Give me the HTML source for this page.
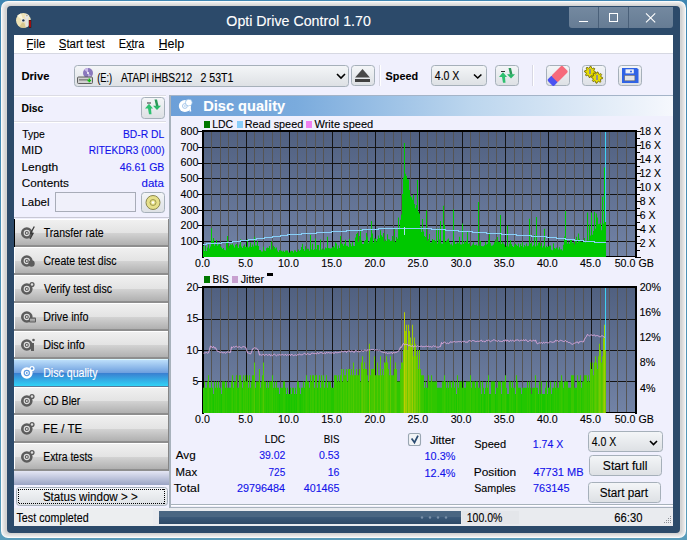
<!DOCTYPE html><html><head><meta charset="utf-8"><style>html,body{margin:0;padding:0;width:687px;height:540px;overflow:hidden;background:#6aa9d6} svg{display:block} text{font-family:"Liberation Sans",sans-serif}</style></head><body>
<svg width="687" height="540" viewBox="0 0 687 540" shape-rendering="crispEdges">
<defs>
<linearGradient id="gFrameL" x1="0" x2="1" y1="0" y2="0"><stop offset="0" stop-color="#ffffff"/><stop offset="1" stop-color="#d9d9d9"/></linearGradient>
<linearGradient id="gPlot" x1="0" x2="0" y1="0" y2="1"><stop offset="0" stop-color="#506080"/><stop offset="1" stop-color="#7283a6"/></linearGradient>
<linearGradient id="gHdr" x1="0" x2="1" y1="0" y2="0"><stop offset="0" stop-color="#6c9fd8"/><stop offset="0.25" stop-color="#7aabdd"/><stop offset="0.6" stop-color="#bcd6ee"/><stop offset="1" stop-color="#f6f8fd"/></linearGradient>
<linearGradient id="gNav" x1="0" x2="0" y1="0" y2="1"><stop offset="0" stop-color="#f2f2f2"/><stop offset="0.45" stop-color="#e2e2e2"/><stop offset="1" stop-color="#b9b9b9"/></linearGradient>
<linearGradient id="gNavSel" x1="0" x2="0" y1="0" y2="1"><stop offset="0" stop-color="#b2d6fa"/><stop offset="0.5" stop-color="#4b96e4"/><stop offset="1" stop-color="#33c6f4"/></linearGradient>
<linearGradient id="gBtn" x1="0" x2="0" y1="0" y2="1"><stop offset="0" stop-color="#f4f6f8"/><stop offset="1" stop-color="#dde0e4"/></linearGradient>
<linearGradient id="gGap" x1="0" x2="0" y1="0" y2="1"><stop offset="0" stop-color="#e6e6f4"/><stop offset="1" stop-color="#a2aac8"/></linearGradient>
<linearGradient id="gProg" x1="0" x2="0" y1="0" y2="1"><stop offset="0" stop-color="#4a6a8a"/><stop offset="0.5" stop-color="#3a5878"/><stop offset="1" stop-color="#2e4a68"/></linearGradient>
</defs>
<linearGradient id="gFr" x1="0" x2="1" y1="0" y2="0"><stop offset="0" stop-color="#ffffff"/><stop offset="0.009" stop-color="#e6e6e6"/><stop offset="0.991" stop-color="#e6e6e6"/><stop offset="1" stop-color="#ffffff"/></linearGradient>
<linearGradient id="gDesk" x1="0" x2="0" y1="0" y2="1"><stop offset="0" stop-color="#3f86b2"/><stop offset="1" stop-color="#5a9cba"/></linearGradient>
<rect x="0" y="0" width="687" height="540" fill="url(#gDesk)" />
<rect x="1" y="1" width="685" height="537" fill="#fafafa" rx="7" shape-rendering="geometricPrecision"/>
<rect x="2" y="2" width="683" height="535" fill="#ececec" rx="6" shape-rendering="geometricPrecision"/>
<rect x="3" y="3" width="681" height="533" fill="#e4e4e4" rx="5" shape-rendering="geometricPrecision"/>
<rect x="4" y="4" width="679" height="531" fill="#dcdcdc" rx="5" shape-rendering="geometricPrecision"/>
<rect x="5" y="5" width="677" height="529" fill="#d4d4d4" rx="4" shape-rendering="geometricPrecision"/>
<rect x="7" y="6" width="673" height="527" fill="#2c4a6a" rx="4" shape-rendering="geometricPrecision"/>
<linearGradient id="gCap" x1="0" x2="0" y1="0" y2="1"><stop offset="0" stop-color="#7489a0"/><stop offset="1" stop-color="#667c94"/></linearGradient><path d="M569 7 H673 V25 Q673 28 670 28 H572 Q569 28 569 25 Z" fill="url(#gCap)" shape-rendering="geometricPrecision"/>
<rect x="598" y="7" width="1" height="21" fill="#4a6079" />
<rect x="628" y="7" width="1" height="21" fill="#4a6079" />
<rect x="579" y="21" width="9" height="1" fill="#ffffff" />
<rect x="609.5" y="13.5" width="8" height="8" fill="none" stroke="#fff" stroke-width="1"/>
<path d="M646 13.3 L655.2 22.3 M655.2 13.3 L646 22.3" stroke="#fff" stroke-width="1.1" shape-rendering="geometricPrecision"/>
<g shape-rendering="geometricPrecision"><circle cx="23.4" cy="20.4" r="7.4" fill="#efe3b6"/><path d="M23.4 20.4 L17 16 A7.4 7.4 0 0 1 21 13.4 Z" fill="#fbf5dc"/><path d="M23.4 20.4 L26 27.4 A7.4 7.4 0 0 1 19.5 26.6 Z" fill="#d8c890"/><circle cx="23.4" cy="20.4" r="2" fill="#f4f4f4"/><circle cx="23.4" cy="20.4" r="1.2" fill="#1e3048"/><rect x="25.5" y="16" width="2.8" height="10.7" fill="#e4e4e4"/><circle cx="26.9" cy="16.2" r="2" fill="#e8e8e8"/><circle cx="26.9" cy="15.6" r="0.8" fill="#b8a878"/><rect x="28.8" y="20" width="2.4" height="7.8" fill="#111"/><rect x="29.2" y="20.4" width="1.6" height="7" fill="#c01010"/></g>
<text x="226.36" y="26.20" font-size="14.5" textLength="144.45" lengthAdjust="spacingAndGlyphs" fill="#ffffff" stroke="#ffffff" stroke-width="0.12" >Opti Drive Control 1.70</text>
<rect x="14" y="35" width="659" height="18" fill="#ffffff" />
<rect x="14" y="53" width="659" height="1" fill="#d6d8e2" />
<text x="26.35" y="48.20" font-size="12.3" textLength="19.10" lengthAdjust="spacingAndGlyphs" fill="#000" stroke="#000" stroke-width="0.12" >File</text>
<text x="58.78" y="48.20" font-size="12.3" textLength="45.89" lengthAdjust="spacingAndGlyphs" fill="#000" stroke="#000" stroke-width="0.12" >Start test</text>
<text x="118.72" y="48.20" font-size="12.3" textLength="25.67" lengthAdjust="spacingAndGlyphs" fill="#000" stroke="#000" stroke-width="0.12" >Extra</text>
<text x="158.40" y="48.20" font-size="12.3" textLength="25.83" lengthAdjust="spacingAndGlyphs" fill="#000" stroke="#000" stroke-width="0.12" >Help</text>
<rect x="27" y="49" width="6" height="1" fill="#000" />
<rect x="59" y="49" width="7" height="1" fill="#000" />
<rect x="128" y="49" width="5" height="1" fill="#000" />
<rect x="159" y="49" width="8" height="1" fill="#000" />
<rect x="14" y="54" width="659" height="472" fill="#f0f0fd" />
<text x="21.47" y="80.00" font-size="11.5" textLength="27.93" lengthAdjust="spacingAndGlyphs" fill="#000" stroke="#000" stroke-width="0.1" font-weight="700" >Drive</text>
<rect x="74.5" y="65.5" width="274" height="21" rx="3" fill="url(#gBtn)" stroke="#a6b0ba" stroke-width="1" shape-rendering="geometricPrecision"/>
<g shape-rendering="geometricPrecision"><circle cx="88" cy="73" r="5" fill="#8a78bc"/><path d="M88 73 L84 69.5 A5 5 0 0 1 88 68 Z" fill="#c8b8e8"/><path d="M88 73 L92 76.5 A5 5 0 0 1 88 78 Z" fill="#b8a8e0"/><circle cx="88" cy="73" r="1" fill="#ffffff"/><rect x="77.5" y="77" width="15" height="6.5" rx="1" fill="#d0d0d0" stroke="#505050" stroke-width="0.9"/><rect x="79" y="79" width="9" height="1.6" fill="#8a8a8a"/><path d="M89.3 78.6 V82.2 M87.5 80.4 H91.1" stroke="#10c010" stroke-width="1.5"/></g>
<text x="97.14" y="81.80" font-size="12.3" textLength="15.03" lengthAdjust="spacingAndGlyphs" fill="#000" stroke="#000" stroke-width="0.12" >(E:)</text>
<text x="121.00" y="81.80" font-size="12.3" textLength="71.22" lengthAdjust="spacingAndGlyphs" fill="#000" stroke="#000" stroke-width="0.12" >ATAPI iHBS212</text>
<text x="200.47" y="81.80" font-size="12.3" textLength="33.04" lengthAdjust="spacingAndGlyphs" fill="#000" stroke="#000" stroke-width="0.12" >2 53T1</text>
<path d="M337 74 L341 78 L345 74" fill="none" stroke="#000" stroke-width="1.6" shape-rendering="geometricPrecision"/>
<rect x="351.5" y="65.5" width="23" height="20" rx="3" fill="url(#gBtn)" stroke="#a6b0ba" stroke-width="1" shape-rendering="geometricPrecision"/>
<path d="M355.1 77.5 L362.5 69 L369.9 77.5 Z" fill="#484848" shape-rendering="geometricPrecision"/>
<rect x="355" y="79" width="15" height="3" fill="#404040" />
<rect x="379" y="65" width="1" height="21" fill="#d8d8e4" />
<rect x="380" y="65" width="1" height="21" fill="#ffffff" />
<text x="385.58" y="79.80" font-size="11.5" textLength="32.44" lengthAdjust="spacingAndGlyphs" fill="#000" stroke="#000" stroke-width="0.1" font-weight="700" >Speed</text>
<rect x="431.5" y="65.5" width="55" height="20" rx="3" fill="url(#gBtn)" stroke="#a6b0ba" stroke-width="1" shape-rendering="geometricPrecision"/>
<text x="434.79" y="79.80" font-size="12.3" textLength="24.62" lengthAdjust="spacingAndGlyphs" fill="#000" stroke="#000" stroke-width="0.12" >4.0 X</text>
<path d="M474 74.5 L477.7 78 L481.4 74.5" fill="none" stroke="#000" stroke-width="1.6" shape-rendering="geometricPrecision"/>
<rect x="495.5" y="65.5" width="23" height="20" rx="3" fill="url(#gBtn)" stroke="#a6b0ba" stroke-width="1" shape-rendering="geometricPrecision"/>
<g shape-rendering="geometricPrecision"><path d="M499 77 L503 72.3 L507 77 L505 77 L505.5 82.8 L503 82.8 L502 77 Z" fill="#2ec070"/><path d="M507 74.2 L515 74.2 L511 78.5 Z" fill="#2ab868"/><path d="M508.5 68 L511 68 L512.5 74.5 L510 74.5 Z" fill="#2a9858"/><rect x="501" y="71" width="4" height="1" fill="#333"/></g>
<rect x="532" y="65" width="1" height="21" fill="#d8d8e4" />
<rect x="533" y="65" width="1" height="21" fill="#ffffff" />
<rect x="546.5" y="65.5" width="23" height="20" rx="3" fill="url(#gBtn)" stroke="#a6b0ba" stroke-width="1" shape-rendering="geometricPrecision"/>
<g shape-rendering="geometricPrecision" transform="rotate(-45 558 75.5)"><rect x="547" y="71" width="7" height="9" rx="1.5" fill="#4a52f2"/><rect x="553" y="71" width="15" height="9" rx="1.5" fill="#f66a7a"/></g>
<rect x="582.5" y="65.5" width="23" height="20" rx="3" fill="url(#gBtn)" stroke="#a6b0ba" stroke-width="1" shape-rendering="geometricPrecision"/>
<g shape-rendering="geometricPrecision"><polygon points="595.70,71.90 595.59,72.99 593.83,73.44 593.45,74.14 594.06,75.86 593.21,76.56 591.64,75.63 590.89,75.85 590.10,77.50 589.01,77.39 588.56,75.63 587.86,75.25 586.14,75.86 585.44,75.01 586.37,73.44 586.15,72.69 584.50,71.90 584.61,70.81 586.37,70.36 586.75,69.66 586.14,67.94 586.99,67.24 588.56,68.17 589.31,67.95 590.10,66.30 591.19,66.41 591.64,68.17 592.34,68.55 594.06,67.94 594.76,68.79 593.83,70.36 594.05,71.11" fill="#e6dc00" stroke="#6a6000" stroke-width="0.8"/><polygon points="602.60,77.60 602.49,78.69 600.73,79.14 600.35,79.84 600.96,81.56 600.11,82.26 598.54,81.33 597.79,81.55 597.00,83.20 595.91,83.09 595.46,81.33 594.76,80.95 593.04,81.56 592.34,80.71 593.27,79.14 593.05,78.39 591.40,77.60 591.51,76.51 593.27,76.06 593.65,75.36 593.04,73.64 593.89,72.94 595.46,73.87 596.21,73.65 597.00,72.00 598.09,72.11 598.54,73.87 599.24,74.25 600.96,73.64 601.66,74.49 600.73,76.06 600.95,76.81" fill="#e6dc00" stroke="#6a6000" stroke-width="0.8"/><rect x="589" y="69" width="2" height="5" fill="#909090"/><rect x="596" y="75" width="2" height="5" fill="#909090"/></g>
<rect x="618.5" y="65.5" width="23" height="20" rx="3" fill="url(#gBtn)" stroke="#a6b0ba" stroke-width="1" shape-rendering="geometricPrecision"/>
<g shape-rendering="geometricPrecision"><path d="M622 68 H637 L638.5 69.5 V83 H622 Z" fill="#2f63e6"/><rect x="625.5" y="69.3" width="8.3" height="4.1" fill="#eef0f4"/><circle cx="631" cy="71.4" r="1" fill="#2f63e6"/><rect x="624.7" y="75.3" width="10.2" height="5.5" fill="#e4e4e4" stroke="#6a6a6a" stroke-width="0.6"/></g>
<rect x="14" y="95" width="152" height="1" fill="#dcdce4" />
<rect x="14" y="96" width="152" height="1" fill="#ffffff" />
<text x="21.53" y="111.90" font-size="11.5" textLength="21.80" lengthAdjust="spacingAndGlyphs" fill="#000" stroke="#000" stroke-width="0.1" font-weight="700" >Disc</text>
<rect x="141.5" y="97.5" width="23" height="21" rx="3" fill="url(#gBtn)" stroke="#a6b0ba" stroke-width="1" shape-rendering="geometricPrecision"/>
<g shape-rendering="geometricPrecision" transform="translate(-354 31.5)"><path d="M499 77 L503 72.3 L507 77 L505 77 L505.5 82.8 L503 82.8 L502 77 Z" fill="#2ec070"/><path d="M507 74.2 L515 74.2 L511 78.5 Z" fill="#2ab868"/><path d="M508.5 68 L511 68 L512.5 74.5 L510 74.5 Z" fill="#2a9858"/><rect x="501" y="71" width="4" height="1" fill="#333"/></g>
<rect x="14" y="121" width="152" height="1" fill="#dcdce4" />
<rect x="14" y="122" width="152" height="1" fill="#ffffff" />
<text x="22.19" y="138.20" font-size="11.5" textLength="22.61" lengthAdjust="spacingAndGlyphs" fill="#000" stroke="#000" stroke-width="0.12" >Type</text>
<text x="122.98" y="138.20" font-size="11.5" textLength="41.24" lengthAdjust="spacingAndGlyphs" fill="#1212ea" stroke="#1212ea" stroke-width="0.12" >BD-R DL</text>
<text x="21.48" y="154.20" font-size="11.5" textLength="21.07" lengthAdjust="spacingAndGlyphs" fill="#000" stroke="#000" stroke-width="0.12" >MID</text>
<text x="88.70" y="154.20" font-size="11.5" textLength="75.83" lengthAdjust="spacingAndGlyphs" fill="#1212ea" stroke="#1212ea" stroke-width="0.12" >RITEKDR3 (000)</text>
<text x="21.44" y="170.60" font-size="11.5" textLength="36.73" lengthAdjust="spacingAndGlyphs" fill="#000" stroke="#000" stroke-width="0.12" >Length</text>
<text x="119.79" y="170.60" font-size="11.5" textLength="44.64" lengthAdjust="spacingAndGlyphs" fill="#1212ea" stroke="#1212ea" stroke-width="0.12" >46.61 GB</text>
<text x="21.81" y="186.80" font-size="11.5" textLength="47.07" lengthAdjust="spacingAndGlyphs" fill="#000" stroke="#000" stroke-width="0.12" >Contents</text>
<text x="141.54" y="186.80" font-size="11.5" textLength="22.38" lengthAdjust="spacingAndGlyphs" fill="#1212ea" stroke="#1212ea" stroke-width="0.12" >data</text>
<text x="21.48" y="206.00" font-size="11.5" textLength="28.09" lengthAdjust="spacingAndGlyphs" fill="#000" stroke="#000" stroke-width="0.12" >Label</text>
<rect x="55.5" y="192.5" width="80" height="19" fill="#f0f0fa" stroke="#a8acb8" stroke-width="1"/>
<rect x="141.5" y="192.5" width="23" height="20" rx="3" fill="url(#gBtn)" stroke="#a6b0ba" stroke-width="1" shape-rendering="geometricPrecision"/>
<g shape-rendering="geometricPrecision"><circle cx="153" cy="202.5" r="7" fill="#e6e08a" stroke="#8a8650" stroke-width="1"/><circle cx="153" cy="202.5" r="3" fill="none" stroke="#a09a50" stroke-width="1"/><circle cx="153" cy="202.5" r="1.2" fill="#fff"/></g>
<rect x="14" y="217" width="155" height="1" fill="#c8c8d4" />
<linearGradient id="gNavT" x1="0" x2="0" y1="0" y2="1"><stop offset="0" stop-color="#f0f0f0"/><stop offset="1" stop-color="#e3e3e3"/></linearGradient>
<linearGradient id="gNavB" x1="0" x2="0" y1="0" y2="1"><stop offset="0" stop-color="#d3d3d3"/><stop offset="1" stop-color="#b0b0b0"/></linearGradient>
<linearGradient id="gSelT" x1="0" x2="0" y1="0" y2="1"><stop offset="0" stop-color="#bcdefa"/><stop offset="1" stop-color="#6c9ede"/></linearGradient>
<linearGradient id="gSelB" x1="0" x2="0" y1="0" y2="1"><stop offset="0" stop-color="#3a7ed0"/><stop offset="1" stop-color="#30d2f6"/></linearGradient>
<rect x="14" y="219" width="155" height="1" fill="#ffffff" />
<rect x="14" y="220" width="154" height="13" fill="url(#gNavT)" />
<rect x="14" y="233" width="154" height="12" fill="url(#gNavB)" />
<rect x="14" y="245" width="155" height="2" fill="#8e8e8e" />
<rect x="168" y="219" width="1" height="28" fill="#868686" />
<rect x="14" y="219" width="1" height="26" fill="#ffffff" />
<rect x="14" y="219" width="1" height="28" fill="#000000" />
<g shape-rendering="geometricPrecision"><circle cx="26.8" cy="233" r="5.8" fill="#5c5c5c"/><circle cx="26.8" cy="233" r="2.6" fill="none" stroke="#e0e0e0" stroke-width="1.1"/><circle cx="26.8" cy="233" r="0.9" fill="#e0e0e0"/>
<path d="M34.3 226.5 L30.5 233.5 L33 233.5 L30 239" fill="none" stroke="#3a3a3a" stroke-width="1.3"/>
</g>
<text x="43.79" y="236.80" font-size="12.3" textLength="59.91" lengthAdjust="spacingAndGlyphs" fill="#000" stroke="#000" stroke-width="0.12" >Transfer rate</text>
<rect x="14" y="247" width="155" height="1" fill="#ffffff" />
<rect x="14" y="248" width="154" height="13" fill="url(#gNavT)" />
<rect x="14" y="261" width="154" height="12" fill="url(#gNavB)" />
<rect x="14" y="273" width="155" height="2" fill="#8e8e8e" />
<rect x="168" y="247" width="1" height="28" fill="#868686" />
<rect x="14" y="247" width="1" height="26" fill="#ffffff" />
<g shape-rendering="geometricPrecision"><circle cx="26.8" cy="261" r="5.8" fill="#5c5c5c"/><circle cx="26.8" cy="261" r="2.6" fill="none" stroke="#e0e0e0" stroke-width="1.1"/><circle cx="26.8" cy="261" r="0.9" fill="#e0e0e0"/>
<circle cx="31.5" cy="263.5" r="3.2" fill="#5c5c5c"/>
</g>
<text x="43.47" y="264.80" font-size="12.3" textLength="73.01" lengthAdjust="spacingAndGlyphs" fill="#000" stroke="#000" stroke-width="0.12" >Create test disc</text>
<rect x="14" y="275" width="155" height="1" fill="#ffffff" />
<rect x="14" y="276" width="154" height="13" fill="url(#gNavT)" />
<rect x="14" y="289" width="154" height="12" fill="url(#gNavB)" />
<rect x="14" y="301" width="155" height="2" fill="#8e8e8e" />
<rect x="168" y="275" width="1" height="28" fill="#868686" />
<rect x="14" y="275" width="1" height="26" fill="#ffffff" />
<g shape-rendering="geometricPrecision"><circle cx="26.8" cy="289" r="5.8" fill="#5c5c5c"/><circle cx="26.8" cy="289" r="2.6" fill="none" stroke="#e0e0e0" stroke-width="1.1"/><circle cx="26.8" cy="289" r="0.9" fill="#e0e0e0"/>
<circle cx="32" cy="284.5" r="2.6" fill="#5c5c5c"/><circle cx="32" cy="284.5" r="1.2" fill="#e0e0e0"/>
</g>
<text x="43.95" y="292.80" font-size="12.3" textLength="68.04" lengthAdjust="spacingAndGlyphs" fill="#000" stroke="#000" stroke-width="0.12" >Verify test disc</text>
<rect x="14" y="303" width="155" height="1" fill="#ffffff" />
<rect x="14" y="304" width="154" height="13" fill="url(#gNavT)" />
<rect x="14" y="317" width="154" height="12" fill="url(#gNavB)" />
<rect x="14" y="329" width="155" height="2" fill="#8e8e8e" />
<rect x="168" y="303" width="1" height="28" fill="#868686" />
<rect x="14" y="303" width="1" height="26" fill="#ffffff" />
<g shape-rendering="geometricPrecision"><circle cx="26.8" cy="317" r="5.8" fill="#5c5c5c"/><circle cx="26.8" cy="317" r="2.6" fill="none" stroke="#e0e0e0" stroke-width="1.1"/><circle cx="26.8" cy="317" r="0.9" fill="#e0e0e0"/>
<rect x="29" y="317.5" width="7" height="5" rx="1" fill="#5c5c5c"/><rect x="30" y="318.8" width="5" height="0.9" fill="#d0d0d0"/><rect x="30" y="320.4" width="5" height="0.9" fill="#d0d0d0"/>
</g>
<text x="43.14" y="320.80" font-size="12.3" textLength="45.38" lengthAdjust="spacingAndGlyphs" fill="#000" stroke="#000" stroke-width="0.12" >Drive info</text>
<rect x="14" y="331" width="155" height="1" fill="#ffffff" />
<rect x="14" y="332" width="154" height="13" fill="url(#gNavT)" />
<rect x="14" y="345" width="154" height="12" fill="url(#gNavB)" />
<rect x="14" y="357" width="155" height="2" fill="#8e8e8e" />
<rect x="168" y="331" width="1" height="28" fill="#868686" />
<rect x="14" y="331" width="1" height="26" fill="#ffffff" />
<g shape-rendering="geometricPrecision"><circle cx="26.8" cy="345" r="5.8" fill="#5c5c5c"/><circle cx="26.8" cy="345" r="2.6" fill="none" stroke="#e0e0e0" stroke-width="1.1"/><circle cx="26.8" cy="345" r="0.9" fill="#e0e0e0"/>
<rect x="31" y="343" width="3" height="8" fill="#5c5c5c"/><circle cx="33.5" cy="340" r="1.3" fill="#5c5c5c"/>
</g>
<text x="43.13" y="348.80" font-size="12.3" textLength="41.60" lengthAdjust="spacingAndGlyphs" fill="#000" stroke="#000" stroke-width="0.12" >Disc info</text>
<rect x="14" y="359" width="155" height="1" fill="#d8f6ff" />
<rect x="14" y="360" width="154" height="13" fill="url(#gSelT)" />
<rect x="14" y="373" width="154" height="13" fill="url(#gSelB)" />
<rect x="14" y="386" width="155" height="1" fill="#5a7a98" />
<rect x="168" y="359" width="1" height="28" fill="#5a7a98" />
<g shape-rendering="geometricPrecision"><circle cx="26.8" cy="373" r="5.8" fill="#ffffff"/><circle cx="26.8" cy="373" r="2.6" fill="none" stroke="#5d9ae0" stroke-width="1.1"/><circle cx="26.8" cy="373" r="0.9" fill="#5d9ae0"/>
<circle cx="32" cy="368.5" r="2.6" fill="#ffffff"/><circle cx="32" cy="368.5" r="1.2" fill="#5d9ae0"/>
</g>
<text x="43.15" y="376.80" font-size="12.3" textLength="54.33" lengthAdjust="spacingAndGlyphs" fill="#ffffff" stroke="#ffffff" stroke-width="0.12" >Disc quality</text>
<rect x="14" y="387" width="155" height="1" fill="#ffffff" />
<rect x="14" y="388" width="154" height="13" fill="url(#gNavT)" />
<rect x="14" y="401" width="154" height="12" fill="url(#gNavB)" />
<rect x="14" y="413" width="155" height="2" fill="#8e8e8e" />
<rect x="168" y="387" width="1" height="28" fill="#868686" />
<rect x="14" y="387" width="1" height="26" fill="#ffffff" />
<g shape-rendering="geometricPrecision"><circle cx="26.8" cy="401" r="5.8" fill="#5c5c5c"/><circle cx="26.8" cy="401" r="2.6" fill="none" stroke="#e0e0e0" stroke-width="1.1"/><circle cx="26.8" cy="401" r="0.9" fill="#e0e0e0"/>
<circle cx="32" cy="396.5" r="2.6" fill="#5c5c5c"/><circle cx="32" cy="396.5" r="1.2" fill="#e0e0e0"/>
</g>
<text x="43.47" y="404.80" font-size="12.3" textLength="36.89" lengthAdjust="spacingAndGlyphs" fill="#000" stroke="#000" stroke-width="0.12" >CD Bler</text>
<rect x="14" y="415" width="155" height="1" fill="#ffffff" />
<rect x="14" y="416" width="154" height="13" fill="url(#gNavT)" />
<rect x="14" y="429" width="154" height="12" fill="url(#gNavB)" />
<rect x="14" y="441" width="155" height="2" fill="#8e8e8e" />
<rect x="168" y="415" width="1" height="28" fill="#868686" />
<rect x="14" y="415" width="1" height="26" fill="#ffffff" />
<g shape-rendering="geometricPrecision"><circle cx="26.8" cy="429" r="5.8" fill="#5c5c5c"/><circle cx="26.8" cy="429" r="2.6" fill="none" stroke="#e0e0e0" stroke-width="1.1"/><circle cx="26.8" cy="429" r="0.9" fill="#e0e0e0"/>
<circle cx="32" cy="424.5" r="2.6" fill="#5c5c5c"/><circle cx="32" cy="424.5" r="1.2" fill="#e0e0e0"/>
</g>
<text x="43.07" y="432.80" font-size="12.3" textLength="39.21" lengthAdjust="spacingAndGlyphs" fill="#000" stroke="#000" stroke-width="0.12" >FE / TE</text>
<rect x="14" y="443" width="155" height="1" fill="#ffffff" />
<rect x="14" y="444" width="154" height="13" fill="url(#gNavT)" />
<rect x="14" y="457" width="154" height="12" fill="url(#gNavB)" />
<rect x="14" y="469" width="155" height="2" fill="#8e8e8e" />
<rect x="168" y="443" width="1" height="28" fill="#868686" />
<rect x="14" y="443" width="1" height="26" fill="#ffffff" />
<g shape-rendering="geometricPrecision"><circle cx="26.8" cy="457" r="5.8" fill="#5c5c5c"/><circle cx="26.8" cy="457" r="2.6" fill="none" stroke="#e0e0e0" stroke-width="1.1"/><circle cx="26.8" cy="457" r="0.9" fill="#e0e0e0"/>
<circle cx="32" cy="452.5" r="2.6" fill="#5c5c5c"/><circle cx="32" cy="452.5" r="1.2" fill="#e0e0e0"/>
</g>
<text x="43.16" y="460.80" font-size="12.3" textLength="49.39" lengthAdjust="spacingAndGlyphs" fill="#000" stroke="#000" stroke-width="0.12" >Extra tests</text>
<rect x="169" y="95" width="2" height="413" fill="#a8b2bc" />
<linearGradient id="gGap2" x1="0" x2="0" y1="0" y2="1"><stop offset="0" stop-color="#e4e6f4"/><stop offset="1" stop-color="#9aa4c4"/></linearGradient>
<rect x="14" y="471" width="155" height="14" fill="url(#gGap2)" />
<rect x="16.5" y="487.5" width="151" height="18" rx="3" fill="url(#gBtn)" stroke="#a6b0ba" stroke-width="1" shape-rendering="geometricPrecision"/>
<rect x="18.5" y="489.5" width="146" height="14" rx="1" fill="none" stroke="#000" stroke-width="1" stroke-dasharray="1 1"/>
<text x="42.88" y="501.30" font-size="12.3" textLength="94.86" lengthAdjust="spacingAndGlyphs" fill="#000" stroke="#000" stroke-width="0.12" >Status window &gt; &gt;</text>
<rect x="169" y="507" width="504" height="1" fill="#a8b2bc" />
<rect x="171" y="504" width="502" height="1" fill="#a8b2bc" />
<rect x="171" y="505" width="502" height="1" fill="#ffffff" />
<rect x="171" y="95" width="502" height="1" fill="#a4b4c8" />
<rect x="171" y="96" width="502" height="20" fill="url(#gHdr)" />
<g shape-rendering="geometricPrecision"><circle cx="184.9" cy="106" r="6.1" fill="#ffffff"/><circle cx="184.9" cy="106" r="2.4" fill="none" stroke="#9cc0e8" stroke-width="0.9"/><circle cx="184.9" cy="106" r="0.8" fill="#9cc0e8"/><circle cx="188.8" cy="102.6" r="3.4" fill="#ffffff" stroke="#8ab8e4" stroke-width="0.7"/><path d="M189.5 106 L190.5 111.5" stroke="#fff" stroke-width="1.6"/></g>
<text x="203.25" y="111.30" font-size="15" textLength="81.86" lengthAdjust="spacingAndGlyphs" fill="#ffffff" stroke="#ffffff" stroke-width="0.1" font-weight="700" >Disc quality</text>
<rect x="204" y="121" width="6" height="7" fill="#007800" />
<text x="212.16" y="128.00" font-size="11" textLength="20.91" lengthAdjust="spacingAndGlyphs" fill="#000" stroke="#000" stroke-width="0.12" >LDC</text>
<rect x="237" y="121" width="6" height="7" fill="#88ccf8" />
<text x="244.73" y="128.00" font-size="11" textLength="58.51" lengthAdjust="spacingAndGlyphs" fill="#000" stroke="#000" stroke-width="0.12" >Read speed</text>
<rect x="306" y="121" width="6" height="7" fill="#f080f0" />
<text x="314.44" y="128.00" font-size="11" textLength="58.80" lengthAdjust="spacingAndGlyphs" fill="#000" stroke="#000" stroke-width="0.12" >Write speed</text>
<rect x="203" y="131" width="433" height="126" fill="url(#gPlot)" />
<rect x="203" y="241" width="433" height="1" fill="#141414" />
<rect x="203" y="225" width="433" height="1" fill="#141414" />
<rect x="203" y="210" width="433" height="1" fill="#141414" />
<rect x="203" y="194" width="433" height="1" fill="#141414" />
<rect x="203" y="178" width="433" height="1" fill="#141414" />
<rect x="203" y="163" width="433" height="1" fill="#141414" />
<rect x="203" y="147" width="433" height="1" fill="#141414" />
<rect x="211" y="132" width="1" height="125" fill="#555555" />
<rect x="220" y="132" width="1" height="125" fill="#555555" />
<rect x="228" y="132" width="1" height="125" fill="#555555" />
<rect x="237" y="132" width="1" height="125" fill="#555555" />
<rect x="246" y="132" width="1" height="125" fill="#141414" />
<rect x="254" y="132" width="1" height="125" fill="#555555" />
<rect x="263" y="132" width="1" height="125" fill="#555555" />
<rect x="272" y="132" width="1" height="125" fill="#555555" />
<rect x="280" y="132" width="1" height="125" fill="#555555" />
<rect x="289" y="132" width="1" height="125" fill="#141414" />
<rect x="297" y="132" width="1" height="125" fill="#555555" />
<rect x="306" y="132" width="1" height="125" fill="#555555" />
<rect x="315" y="132" width="1" height="125" fill="#555555" />
<rect x="323" y="132" width="1" height="125" fill="#555555" />
<rect x="332" y="132" width="1" height="125" fill="#141414" />
<rect x="341" y="132" width="1" height="125" fill="#555555" />
<rect x="349" y="132" width="1" height="125" fill="#555555" />
<rect x="358" y="132" width="1" height="125" fill="#555555" />
<rect x="367" y="132" width="1" height="125" fill="#555555" />
<rect x="375" y="132" width="1" height="125" fill="#141414" />
<rect x="384" y="132" width="1" height="125" fill="#555555" />
<rect x="393" y="132" width="1" height="125" fill="#555555" />
<rect x="401" y="132" width="1" height="125" fill="#555555" />
<rect x="410" y="132" width="1" height="125" fill="#555555" />
<rect x="419" y="132" width="1" height="125" fill="#141414" />
<rect x="427" y="132" width="1" height="125" fill="#555555" />
<rect x="436" y="132" width="1" height="125" fill="#555555" />
<rect x="444" y="132" width="1" height="125" fill="#555555" />
<rect x="453" y="132" width="1" height="125" fill="#555555" />
<rect x="462" y="132" width="1" height="125" fill="#141414" />
<rect x="470" y="132" width="1" height="125" fill="#555555" />
<rect x="479" y="132" width="1" height="125" fill="#555555" />
<rect x="488" y="132" width="1" height="125" fill="#555555" />
<rect x="496" y="132" width="1" height="125" fill="#555555" />
<rect x="505" y="132" width="1" height="125" fill="#141414" />
<rect x="514" y="132" width="1" height="125" fill="#555555" />
<rect x="522" y="132" width="1" height="125" fill="#555555" />
<rect x="531" y="132" width="1" height="125" fill="#555555" />
<rect x="540" y="132" width="1" height="125" fill="#555555" />
<rect x="548" y="132" width="1" height="125" fill="#141414" />
<rect x="557" y="132" width="1" height="125" fill="#555555" />
<rect x="565" y="132" width="1" height="125" fill="#555555" />
<rect x="574" y="132" width="1" height="125" fill="#555555" />
<rect x="583" y="132" width="1" height="125" fill="#555555" />
<rect x="591" y="132" width="1" height="125" fill="#141414" />
<rect x="600" y="132" width="1" height="125" fill="#555555" />
<rect x="609" y="132" width="1" height="125" fill="#555555" />
<rect x="617" y="132" width="1" height="125" fill="#555555" />
<rect x="626" y="132" width="1" height="125" fill="#555555" />
<rect x="202" y="130" width="435" height="2" fill="#000" />
<rect x="202" y="130" width="2" height="128" fill="#000" />
<rect x="635" y="130" width="2" height="128" fill="#000" />
<rect x="202" y="256" width="435" height="1" fill="#000" />
<path d="M203 245.7H204V257H203ZM204 251.0H205V257H204ZM205 245.8H206V257H205ZM206 250.9H207V257H206ZM207 247.4H208V257H207ZM208 244.5H209V257H208ZM209 248.6H210V257H209ZM210 246.6H211V257H210ZM211 228.2H212V257H211ZM212 241.0H213V257H212ZM213 238.1H214V257H213ZM214 245.7H215V257H214ZM215 243.1H216V257H215ZM216 239.9H217V257H216ZM217 245.7H218V257H217ZM218 244.5H219V257H218ZM219 243.7H220V257H219ZM220 246.2H221V257H220ZM221 247.4H222V257H221ZM222 249.1H223V257H222ZM223 248.0H224V257H223ZM224 249.9H225V257H224ZM225 250.3H226V257H225ZM226 242.9H227V257H226ZM227 236.1H228V257H227ZM228 247.7H229V257H228ZM229 245.7H230V257H229ZM230 244.2H231V257H230ZM231 244.8H232V257H231ZM232 243.5H233V257H232ZM233 245.4H234V257H233ZM234 247.6H235V257H234ZM235 244.7H236V257H235ZM236 243.9H237V257H236ZM237 246.1H238V257H237ZM238 248.0H239V257H238ZM239 244.5H240V257H239ZM240 239.3H241V257H240ZM241 246.4H242V257H241ZM242 247.9H243V257H242ZM243 245.7H244V257H243ZM244 244.5H245V257H244ZM245 247.1H246V257H245ZM246 246.8H247V257H246ZM247 239.4H248V257H247ZM248 247.6H249V257H248ZM249 246.5H250V257H249ZM250 242.6H251V257H250ZM251 247.1H252V257H251ZM252 244.6H253V257H252ZM253 246.6H254V257H253ZM254 236.8H255V257H254ZM255 245.6H256V257H255ZM256 245.6H257V257H256ZM257 241.1H258V257H257ZM258 245.9H259V257H258ZM259 249.9H260V257H259ZM260 249.9H261V257H260ZM261 251.5H262V257H261ZM262 251.6H263V257H262ZM263 246.8H264V257H263ZM264 250.5H265V257H264ZM265 251.1H266V257H265ZM266 248.3H267V257H266ZM267 247.6H268V257H267ZM268 248.1H269V257H268ZM269 245.9H270V257H269ZM270 249.4H271V257H270ZM271 241.5H272V257H271ZM272 249.5H273V257H272ZM273 245.8H274V257H273ZM274 247.0H275V257H274ZM275 248.4H276V257H275ZM276 247.4H277V257H276ZM277 250.5H278V257H277ZM278 252.0H279V257H278ZM279 250.1H280V257H279ZM280 250.6H281V257H280ZM281 250.8H282V257H281ZM282 251.4H283V257H282ZM283 250.7H284V257H283ZM284 252.1H285V257H284ZM285 250.5H286V257H285ZM286 250.6H287V257H286ZM287 250.6H288V257H287ZM288 252.4H289V257H288ZM289 252.5H290V257H289ZM290 251.4H291V257H290ZM291 250.8H292V257H291ZM292 251.1H293V257H292ZM293 252.4H294V257H293ZM294 250.2H295V257H294ZM295 250.5H296V257H295ZM296 251.9H297V257H296ZM297 251.4H298V257H297ZM298 249.6H299V257H298ZM299 251.0H300V257H299ZM300 250.0H301V257H300ZM301 247.1H302V257H301ZM302 243.8H303V257H302ZM303 249.0H304V257H303ZM304 250.7H305V257H304ZM305 246.2H306V257H305ZM306 249.6H307V257H306ZM307 248.7H308V257H307ZM308 248.8H309V257H308ZM309 250.7H310V257H309ZM310 234.9H311V257H310ZM311 249.4H312V257H311ZM312 243.8H313V257H312ZM313 250.0H314V257H313ZM314 249.2H315V257H314ZM315 238.4H316V257H315ZM316 249.3H317V257H316ZM317 244.9H318V257H317ZM318 245.0H319V257H318ZM319 250.2H320V257H319ZM320 239.4H321V257H320ZM321 249.5H322V257H321ZM322 248.6H323V257H322ZM323 250.1H324V257H323ZM324 249.6H325V257H324ZM325 247.6H326V257H325ZM326 248.3H327V257H326ZM327 236.8H328V257H327ZM328 247.9H329V257H328ZM329 248.2H330V257H329ZM330 248.4H331V257H330ZM331 248.2H332V257H331ZM332 247.2H333V257H332ZM333 246.0H334V257H333ZM334 247.4H335V257H334ZM335 242.3H336V257H335ZM336 243.5H337V257H336ZM337 248.8H338V257H337ZM338 245.5H339V257H338ZM339 248.1H340V257H339ZM340 236.1H341V257H340ZM341 243.8H342V257H341ZM342 243.7H343V257H342ZM343 245.7H344V257H343ZM344 243.7H345V257H344ZM345 239.7H346V257H345ZM346 245.8H347V257H346ZM347 245.7H348V257H347ZM348 247.1H349V257H348ZM349 238.9H350V257H349ZM350 243.4H351V257H350ZM351 246.3H352V257H351ZM352 241.9H353V257H352ZM353 245.7H354V257H353ZM354 245.9H355V257H354ZM355 237.6H356V257H355ZM356 234.0H357V257H356ZM357 232.8H358V257H357ZM358 241.7H359V257H358ZM359 235.9H360V257H359ZM360 229.3H361V257H360ZM361 240.5H362V257H361ZM362 244.0H363V257H362ZM363 244.0H364V257H363ZM364 241.1H365V257H364ZM365 240.1H366V257H365ZM366 233.1H367V257H366ZM367 236.7H368V257H367ZM368 243.3H369V257H368ZM369 241.1H370V257H369ZM370 237.5H371V257H370ZM371 221.1H372V257H371ZM372 233.4H373V257H372ZM373 242.7H374V257H373ZM374 238.3H375V257H374ZM375 238.7H376V257H375ZM376 241.6H377V257H376ZM377 238.9H378V257H377ZM378 235.5H379V257H378ZM379 238.1H380V257H379ZM380 230.2H381V257H380ZM381 235.2H382V257H381ZM382 236.7H383V257H382ZM383 233.0H384V257H383ZM384 241.3H385V257H384ZM385 239.6H386V257H385ZM386 241.0H387V257H386ZM387 234.3H388V257H387ZM388 239.2H389V257H388ZM389 239.5H390V257H389ZM390 241.1H391V257H390ZM391 240.8H392V257H391ZM392 236.0H393V257H392ZM393 241.5H394V257H393ZM394 228.7H395V257H394ZM395 241.9H396V257H395ZM396 237.1H397V257H396ZM397 238.7H398V257H397ZM398 217.6H399V257H398ZM399 229.3H400V257H399ZM400 219.8H401V257H400ZM401 214.5H402V257H401ZM402 194.0H403V257H402ZM403 177.6H404V257H403ZM404 143.0H405V257H404ZM405 173.8H406V257H405ZM406 176.0H407V257H406ZM407 179.2H408V257H407ZM408 179.4H409V257H408ZM409 189.9H410V257H409ZM410 195.9H411V257H410ZM411 197.2H412V257H411ZM412 199.7H413V257H412ZM413 194.5H414V257H413ZM414 204.0H415V257H414ZM415 208.3H416V257H415ZM416 205.1H417V257H416ZM417 179.9H418V257H417ZM418 211.7H419V257H418ZM419 213.6H420V257H419ZM420 227.0H421V257H420ZM421 231.9H422V257H421ZM422 218.9H423V257H422ZM423 231.6H424V257H423ZM424 236.0H425V257H424ZM425 236.9H426V257H425ZM426 210.5H427V257H426ZM427 240.8H428V257H427ZM428 238.9H429V257H428ZM429 234.0H430V257H429ZM430 242.7H431V257H430ZM431 242.4H432V257H431ZM432 239.1H433V257H432ZM433 240.0H434V257H433ZM434 240.0H435V257H434ZM435 241.2H436V257H435ZM436 228.8H437V257H436ZM437 243.5H438V257H437ZM438 228.4H439V257H438ZM439 239.4H440V257H439ZM440 221.1H441V257H440ZM441 243.6H442V257H441ZM442 243.7H443V257H442ZM443 205.8H444V257H443ZM444 224.8H445V257H444ZM445 241.9H446V257H445ZM446 240.7H447V257H446ZM447 239.5H448V257H447ZM448 238.5H449V257H448ZM449 242.6H450V257H449ZM450 244.6H451V257H450ZM451 243.5H452V257H451ZM452 245.6H453V257H452ZM453 209.4H454V257H453ZM454 241.2H455V257H454ZM455 243.9H456V257H455ZM456 243.4H457V257H456ZM457 242.2H458V257H457ZM458 243.3H459V257H458ZM459 236.7H460V257H459ZM460 244.3H461V257H460ZM461 244.6H462V257H461ZM462 223.6H463V257H462ZM463 243.9H464V257H463ZM464 240.9H465V257H464ZM465 242.5H466V257H465ZM466 240.8H467V257H466ZM467 231.4H468V257H467ZM468 243.8H469V257H468ZM469 242.7H470V257H469ZM470 246.3H471V257H470ZM471 245.8H472V257H471ZM472 244.6H473V257H472ZM473 242.3H474V257H473ZM474 245.1H475V257H474ZM475 244.9H476V257H475ZM476 244.4H477V257H476ZM477 245.7H478V257H477ZM478 201.9H479V257H478ZM479 245.4H480V257H479ZM480 241.0H481V257H480ZM481 245.9H482V257H481ZM482 246.2H483V257H482ZM483 246.2H484V257H483ZM484 245.3H485V257H484ZM485 241.7H486V257H485ZM486 244.5H487V257H486ZM487 243.8H488V257H487ZM488 239.7H489V257H488ZM489 232.4H490V257H489ZM490 243.3H491V257H490ZM491 245.7H492V257H491ZM492 245.5H493V257H492ZM493 244.4H494V257H493ZM494 242.2H495V257H494ZM495 239.6H496V257H495ZM496 241.9H497V257H496ZM497 237.0H498V257H497ZM498 241.8H499V257H498ZM499 242.2H500V257H499ZM500 214.9H501V257H500ZM501 244.1H502V257H501ZM502 241.8H503V257H502ZM503 243.5H504V257H503ZM504 244.5H505V257H504ZM505 246.9H506V257H505ZM506 245.8H507V257H506ZM507 225.5H508V257H507ZM508 246.4H509V257H508ZM509 243.6H510V257H509ZM510 240.3H511V257H510ZM511 244.0H512V257H511ZM512 246.0H513V257H512ZM513 247.1H514V257H513ZM514 244.7H515V257H514ZM515 243.7H516V257H515ZM516 244.7H517V257H516ZM517 245.9H518V257H517ZM518 243.4H519V257H518ZM519 247.2H520V257H519ZM520 243.7H521V257H520ZM521 245.9H522V257H521ZM522 242.3H523V257H522ZM523 247.2H524V257H523ZM524 245.1H525V257H524ZM525 246.3H526V257H525ZM526 243.4H527V257H526ZM527 246.3H528V257H527ZM528 245.7H529V257H528ZM529 218.7H530V257H529ZM530 243.4H531V257H530ZM531 242.4H532V257H531ZM532 246.5H533V257H532ZM533 245.3H534V257H533ZM534 235.1H535V257H534ZM535 246.4H536V257H535ZM536 217.0H537V257H536ZM537 245.5H538V257H537ZM538 242.9H539V257H538ZM539 242.3H540V257H539ZM540 245.9H541V257H540ZM541 242.7H542V257H541ZM542 247.4H543V257H542ZM543 245.7H544V257H543ZM544 228.7H545V257H544ZM545 247.6H546V257H545ZM546 245.8H547V257H546ZM547 247.0H548V257H547ZM548 246.6H549V257H548ZM549 245.7H550V257H549ZM550 245.6H551V257H550ZM551 249.8H552V257H551ZM552 250.3H553V257H552ZM553 243.2H554V257H553ZM554 248.1H555V257H554ZM555 248.8H556V257H555ZM556 247.6H557V257H556ZM557 248.1H558V257H557ZM558 249.5H559V257H558ZM559 247.2H560V257H559ZM560 249.6H561V257H560ZM561 249.3H562V257H561ZM562 250.4H563V257H562ZM563 244.8H564V257H563ZM564 236.5H565V257H564ZM565 211.0H566V257H565ZM566 238.8H567V257H566ZM567 243.4H568V257H567ZM568 241.8H569V257H568ZM569 243.8H570V257H569ZM570 240.1H571V257H570ZM571 239.8H572V257H571ZM572 242.8H573V257H572ZM573 242.5H574V257H573ZM574 244.4H575V257H574ZM575 239.8H576V257H575ZM576 236.8H577V257H576ZM577 242.7H578V257H577ZM578 233.4H579V257H578ZM579 238.7H580V257H579ZM580 241.4H581V257H580ZM581 241.8H582V257H581ZM582 241.9H583V257H582ZM583 240.0H584V257H583ZM584 238.0H585V257H584ZM585 242.6H586V257H585ZM586 240.7H587V257H586ZM587 212.4H588V257H587ZM588 240.2H589V257H588ZM589 224.5H590V257H589ZM590 235.6H591V257H590ZM591 212.6H592V257H591ZM592 234.7H593V257H592ZM593 230.9H594V257H593ZM594 211.8H595V257H594ZM595 228.8H596V257H595ZM596 213.5H597V257H596ZM597 217.6H598V257H597ZM598 224.2H599V257H598ZM599 223.7H600V257H599ZM600 223.5H601V257H600ZM601 230.2H602V257H601ZM602 196.7H603V257H602ZM603 223.5H604V257H603ZM604 167.5H605V257H604ZM605 219.2H606V257H605Z" fill="#00c800" shape-rendering="geometricPrecision"/>
<path d="M203 244.5H206 V243.5H221 V242.5H232 V241.5H240 V240.5H248 V239.5H256 V238.5H264 V237.5H272 V236.5H280 V235.5H287 V234.5H301 V233.5H316 V232.5H331 V231.5H346 V230.5H362 V229.5H378 V228.5H431 V229.5H445 V230.5H458 V231.5H472 V232.5H486 V233.5H501 V234.5H516 V235.5H531 V236.5H546 V237.5H556 V238.5H565 V239.5H574 V240.5H583 V241.5H594 V242.5H606" fill="none" stroke="#88d0f8" stroke-width="1"/>
<rect x="404" y="227" width="1" height="8" fill="#a8e0f8" />
<rect x="605" y="132" width="1" height="90" fill="#40d0f0" />
<rect x="198" y="241" width="4" height="1" fill="#000" />
<text x="180.61" y="245.05" font-size="11" textLength="17.80" lengthAdjust="spacingAndGlyphs" fill="#000" stroke="#000" stroke-width="0.12" >100</text>
<rect x="198" y="225" width="4" height="1" fill="#000" />
<text x="180.61" y="229.30" font-size="11" textLength="17.80" lengthAdjust="spacingAndGlyphs" fill="#000" stroke="#000" stroke-width="0.12" >200</text>
<rect x="198" y="210" width="4" height="1" fill="#000" />
<text x="180.61" y="213.55" font-size="11" textLength="17.80" lengthAdjust="spacingAndGlyphs" fill="#000" stroke="#000" stroke-width="0.12" >300</text>
<rect x="198" y="194" width="4" height="1" fill="#000" />
<text x="180.61" y="197.80" font-size="11" textLength="17.80" lengthAdjust="spacingAndGlyphs" fill="#000" stroke="#000" stroke-width="0.12" >400</text>
<rect x="198" y="178" width="4" height="1" fill="#000" />
<text x="180.61" y="182.05" font-size="11" textLength="17.80" lengthAdjust="spacingAndGlyphs" fill="#000" stroke="#000" stroke-width="0.12" >500</text>
<rect x="198" y="163" width="4" height="1" fill="#000" />
<text x="180.61" y="166.30" font-size="11" textLength="17.80" lengthAdjust="spacingAndGlyphs" fill="#000" stroke="#000" stroke-width="0.12" >600</text>
<rect x="198" y="147" width="4" height="1" fill="#000" />
<text x="180.61" y="150.55" font-size="11" textLength="17.80" lengthAdjust="spacingAndGlyphs" fill="#000" stroke="#000" stroke-width="0.12" >700</text>
<rect x="198" y="131" width="4" height="1" fill="#000" />
<text x="180.61" y="134.80" font-size="11" textLength="17.80" lengthAdjust="spacingAndGlyphs" fill="#000" stroke="#000" stroke-width="0.12" >800</text>
<rect x="637" y="257" width="4" height="1" fill="#000" />
<rect x="637" y="250" width="3" height="1" fill="#000" />
<rect x="637" y="243" width="4" height="1" fill="#000" />
<text x="639.68" y="246.80" font-size="11" textLength="15.69" lengthAdjust="spacingAndGlyphs" fill="#000" stroke="#000" stroke-width="0.12" >2 X</text>
<rect x="637" y="236" width="3" height="1" fill="#000" />
<rect x="637" y="229" width="4" height="1" fill="#000" />
<text x="639.99" y="232.80" font-size="11" textLength="15.69" lengthAdjust="spacingAndGlyphs" fill="#000" stroke="#000" stroke-width="0.12" >4 X</text>
<rect x="637" y="222" width="3" height="1" fill="#000" />
<rect x="637" y="215" width="4" height="1" fill="#000" />
<text x="639.68" y="218.80" font-size="11" textLength="15.69" lengthAdjust="spacingAndGlyphs" fill="#000" stroke="#000" stroke-width="0.12" >6 X</text>
<rect x="637" y="208" width="3" height="1" fill="#000" />
<rect x="637" y="201" width="4" height="1" fill="#000" />
<text x="639.73" y="204.80" font-size="11" textLength="15.69" lengthAdjust="spacingAndGlyphs" fill="#000" stroke="#000" stroke-width="0.12" >8 X</text>
<rect x="637" y="194" width="3" height="1" fill="#000" />
<rect x="637" y="187" width="4" height="1" fill="#000" />
<text x="639.42" y="190.80" font-size="11" textLength="21.50" lengthAdjust="spacingAndGlyphs" fill="#000" stroke="#000" stroke-width="0.12" >10 X</text>
<rect x="637" y="180" width="3" height="1" fill="#000" />
<rect x="637" y="173" width="4" height="1" fill="#000" />
<text x="639.42" y="176.80" font-size="11" textLength="21.50" lengthAdjust="spacingAndGlyphs" fill="#000" stroke="#000" stroke-width="0.12" >12 X</text>
<rect x="637" y="166" width="3" height="1" fill="#000" />
<rect x="637" y="159" width="4" height="1" fill="#000" />
<text x="639.42" y="162.80" font-size="11" textLength="21.50" lengthAdjust="spacingAndGlyphs" fill="#000" stroke="#000" stroke-width="0.12" >14 X</text>
<rect x="637" y="152" width="3" height="1" fill="#000" />
<rect x="637" y="145" width="4" height="1" fill="#000" />
<text x="639.42" y="148.80" font-size="11" textLength="21.50" lengthAdjust="spacingAndGlyphs" fill="#000" stroke="#000" stroke-width="0.12" >16 X</text>
<rect x="637" y="138" width="3" height="1" fill="#000" />
<rect x="637" y="131" width="4" height="1" fill="#000" />
<text x="639.42" y="134.80" font-size="11" textLength="21.50" lengthAdjust="spacingAndGlyphs" fill="#000" stroke="#000" stroke-width="0.12" >18 X</text>
<text x="195.06" y="266.60" font-size="11" textLength="14.83" lengthAdjust="spacingAndGlyphs" fill="#000" stroke="#000" stroke-width="0.12" >0.0</text>
<text x="238.16" y="266.60" font-size="11" textLength="14.83" lengthAdjust="spacingAndGlyphs" fill="#000" stroke="#000" stroke-width="0.12" >5.0</text>
<text x="278.11" y="266.60" font-size="11" textLength="20.77" lengthAdjust="spacingAndGlyphs" fill="#000" stroke="#000" stroke-width="0.12" >10.0</text>
<text x="321.21" y="266.60" font-size="11" textLength="20.77" lengthAdjust="spacingAndGlyphs" fill="#000" stroke="#000" stroke-width="0.12" >15.0</text>
<text x="364.44" y="266.60" font-size="11" textLength="20.77" lengthAdjust="spacingAndGlyphs" fill="#000" stroke="#000" stroke-width="0.12" >20.0</text>
<text x="407.54" y="266.60" font-size="11" textLength="20.77" lengthAdjust="spacingAndGlyphs" fill="#000" stroke="#000" stroke-width="0.12" >25.0</text>
<text x="450.70" y="266.60" font-size="11" textLength="20.77" lengthAdjust="spacingAndGlyphs" fill="#000" stroke="#000" stroke-width="0.12" >30.0</text>
<text x="493.80" y="266.60" font-size="11" textLength="20.77" lengthAdjust="spacingAndGlyphs" fill="#000" stroke="#000" stroke-width="0.12" >35.0</text>
<text x="537.00" y="266.60" font-size="11" textLength="20.77" lengthAdjust="spacingAndGlyphs" fill="#000" stroke="#000" stroke-width="0.12" >40.0</text>
<text x="580.10" y="266.60" font-size="11" textLength="20.77" lengthAdjust="spacingAndGlyphs" fill="#000" stroke="#000" stroke-width="0.12" >45.0</text>
<text x="614.70" y="266.60" font-size="11" textLength="39.15" lengthAdjust="spacingAndGlyphs" fill="#000" stroke="#000" stroke-width="0.12" >50.0 GB</text>
<rect x="204" y="276" width="6" height="7" fill="#007800" />
<text x="212.49" y="283.30" font-size="11" textLength="16.39" lengthAdjust="spacingAndGlyphs" fill="#000" stroke="#000" stroke-width="0.12" >BIS</text>
<rect x="232" y="276" width="6" height="7" fill="#c8a0d0" />
<text x="240.74" y="283.30" font-size="11" textLength="23.24" lengthAdjust="spacingAndGlyphs" fill="#000" stroke="#000" stroke-width="0.12" >Jitter</text>
<rect x="267" y="273" width="6" height="3" fill="#000" />
<rect x="203" y="287" width="433" height="126" fill="url(#gPlot)" />
<rect x="203" y="381" width="433" height="1" fill="#141414" />
<rect x="203" y="350" width="433" height="1" fill="#141414" />
<rect x="203" y="319" width="433" height="1" fill="#141414" />
<rect x="211" y="288" width="1" height="125" fill="#555555" />
<rect x="220" y="288" width="1" height="125" fill="#555555" />
<rect x="228" y="288" width="1" height="125" fill="#555555" />
<rect x="237" y="288" width="1" height="125" fill="#555555" />
<rect x="246" y="288" width="1" height="125" fill="#141414" />
<rect x="254" y="288" width="1" height="125" fill="#555555" />
<rect x="263" y="288" width="1" height="125" fill="#555555" />
<rect x="272" y="288" width="1" height="125" fill="#555555" />
<rect x="280" y="288" width="1" height="125" fill="#555555" />
<rect x="289" y="288" width="1" height="125" fill="#141414" />
<rect x="297" y="288" width="1" height="125" fill="#555555" />
<rect x="306" y="288" width="1" height="125" fill="#555555" />
<rect x="315" y="288" width="1" height="125" fill="#555555" />
<rect x="323" y="288" width="1" height="125" fill="#555555" />
<rect x="332" y="288" width="1" height="125" fill="#141414" />
<rect x="341" y="288" width="1" height="125" fill="#555555" />
<rect x="349" y="288" width="1" height="125" fill="#555555" />
<rect x="358" y="288" width="1" height="125" fill="#555555" />
<rect x="367" y="288" width="1" height="125" fill="#555555" />
<rect x="375" y="288" width="1" height="125" fill="#141414" />
<rect x="384" y="288" width="1" height="125" fill="#555555" />
<rect x="393" y="288" width="1" height="125" fill="#555555" />
<rect x="401" y="288" width="1" height="125" fill="#555555" />
<rect x="410" y="288" width="1" height="125" fill="#555555" />
<rect x="419" y="288" width="1" height="125" fill="#141414" />
<rect x="427" y="288" width="1" height="125" fill="#555555" />
<rect x="436" y="288" width="1" height="125" fill="#555555" />
<rect x="444" y="288" width="1" height="125" fill="#555555" />
<rect x="453" y="288" width="1" height="125" fill="#555555" />
<rect x="462" y="288" width="1" height="125" fill="#141414" />
<rect x="470" y="288" width="1" height="125" fill="#555555" />
<rect x="479" y="288" width="1" height="125" fill="#555555" />
<rect x="488" y="288" width="1" height="125" fill="#555555" />
<rect x="496" y="288" width="1" height="125" fill="#555555" />
<rect x="505" y="288" width="1" height="125" fill="#141414" />
<rect x="514" y="288" width="1" height="125" fill="#555555" />
<rect x="522" y="288" width="1" height="125" fill="#555555" />
<rect x="531" y="288" width="1" height="125" fill="#555555" />
<rect x="540" y="288" width="1" height="125" fill="#555555" />
<rect x="548" y="288" width="1" height="125" fill="#141414" />
<rect x="557" y="288" width="1" height="125" fill="#555555" />
<rect x="565" y="288" width="1" height="125" fill="#555555" />
<rect x="574" y="288" width="1" height="125" fill="#555555" />
<rect x="583" y="288" width="1" height="125" fill="#555555" />
<rect x="591" y="288" width="1" height="125" fill="#141414" />
<rect x="600" y="288" width="1" height="125" fill="#555555" />
<rect x="609" y="288" width="1" height="125" fill="#555555" />
<rect x="617" y="288" width="1" height="125" fill="#555555" />
<rect x="626" y="288" width="1" height="125" fill="#555555" />
<rect x="202" y="286" width="435" height="2" fill="#000" />
<rect x="202" y="286" width="2" height="128" fill="#000" />
<rect x="635" y="286" width="2" height="128" fill="#000" />
<rect x="202" y="412" width="435" height="1" fill="#000" />
<path d="M203 387.8H204V413H203ZM205 387.8H206V413H205ZM206 387.8H207V413H206ZM209 387.8H210V413H209ZM210 387.8H211V413H210ZM212 387.8H213V413H212ZM215 387.8H216V413H215ZM217 387.8H218V413H217ZM219 387.8H220V413H219ZM220 387.8H221V413H220ZM225 387.8H226V413H225ZM227 387.8H228V413H227ZM228 387.8H229V413H228ZM229 387.8H230V413H229ZM230 387.8H231V413H230ZM233 387.8H234V413H233ZM237 387.8H238V413H237ZM238 387.8H239V413H238ZM242 387.8H243V413H242ZM248 387.8H249V413H248ZM250 387.8H251V413H250ZM255 387.8H256V413H255ZM260 387.8H261V413H260ZM266 387.8H267V413H266ZM268 387.8H269V413H268ZM273 387.8H274V413H273ZM275 387.8H276V413H275ZM277 387.8H278V413H277ZM278 387.8H279V413H278ZM280 387.8H281V413H280ZM281 387.8H282V413H281ZM282 387.8H283V413H282ZM285 387.8H286V413H285ZM287 387.8H288V413H287ZM290 387.8H291V413H290ZM292 387.8H293V413H292ZM293 387.8H294V413H293ZM295 387.8H296V413H295ZM299 387.8H300V413H299ZM301 387.8H302V413H301ZM302 387.8H303V413H302ZM304 387.8H305V413H304ZM309 387.8H310V413H309ZM314 387.8H315V413H314ZM317 387.8H318V413H317ZM320 387.8H321V413H320ZM324 387.8H325V413H324ZM327 387.8H328V413H327ZM331 387.8H332V413H331ZM332 387.8H333V413H332ZM333 387.8H334V413H333ZM424 387.8H425V413H424ZM426 387.8H427V413H426ZM427 387.8H428V413H427ZM437 387.8H438V413H437ZM438 387.8H439V413H438ZM439 387.8H440V413H439ZM440 387.8H441V413H440ZM441 387.8H442V413H441ZM446 387.8H447V413H446ZM448 387.8H449V413H448ZM451 387.8H452V413H451ZM454 387.8H455V413H454ZM458 387.8H459V413H458ZM462 387.8H463V413H462ZM464 387.8H465V413H464ZM465 387.8H466V413H465ZM471 387.8H472V413H471ZM475 387.8H476V413H475ZM478 387.8H479V413H478ZM479 387.8H480V413H479ZM483 387.8H484V413H483ZM485 387.8H486V413H485ZM487 387.8H488V413H487ZM496 387.8H497V413H496ZM497 387.8H498V413H497ZM506 387.8H507V413H506ZM511 387.8H512V413H511ZM513 387.8H514V413H513ZM514 387.8H515V413H514ZM518 387.8H519V413H518ZM519 387.8H520V413H519ZM520 387.8H521V413H520ZM522 387.8H523V413H522ZM523 387.8H524V413H523ZM524 387.8H525V413H524ZM525 387.8H526V413H525ZM526 387.8H527V413H526ZM528 387.8H529V413H528ZM530 387.8H531V413H530ZM532 387.8H533V413H532ZM533 387.8H534V413H533ZM534 387.8H535V413H534ZM536 387.8H537V413H536ZM537 387.8H538V413H537ZM545 387.8H546V413H545ZM548 387.8H549V413H548ZM549 387.8H550V413H549ZM552 387.8H553V413H552ZM553 387.8H554V413H553ZM555 387.8H556V413H555ZM557 387.8H558V413H557ZM558 387.8H559V413H558ZM563 387.8H564V413H563ZM568 387.8H569V413H568ZM569 387.8H570V413H569ZM570 387.8H571V413H570ZM574 387.8H575V413H574ZM575 387.8H576V413H575ZM576 387.8H577V413H576ZM581 387.8H582V413H581Z" fill="#23c600" shape-rendering="geometricPrecision"/>
<path d="M204 381.5H205V413H204ZM207 381.5H208V413H207ZM211 381.5H212V413H211ZM214 381.5H215V413H214ZM216 381.5H217V413H216ZM218 381.5H219V413H218ZM222 381.5H223V413H222ZM223 381.5H224V413H223ZM224 381.5H225V413H224ZM226 381.5H227V413H226ZM231 381.5H232V413H231ZM234 381.5H235V413H234ZM235 381.5H236V413H235ZM241 381.5H242V413H241ZM244 381.5H245V413H244ZM246 381.5H247V413H246ZM251 381.5H252V413H251ZM256 381.5H257V413H256ZM257 381.5H258V413H257ZM258 381.5H259V413H258ZM261 381.5H262V413H261ZM264 381.5H265V413H264ZM265 381.5H266V413H265ZM267 381.5H268V413H267ZM269 381.5H270V413H269ZM270 381.5H271V413H270ZM271 381.5H272V413H271ZM274 381.5H275V413H274ZM276 381.5H277V413H276ZM283 381.5H284V413H283ZM284 381.5H285V413H284ZM297 381.5H298V413H297ZM298 381.5H299V413H298ZM303 381.5H304V413H303ZM305 381.5H306V413H305ZM307 381.5H308V413H307ZM308 381.5H309V413H308ZM311 381.5H312V413H311ZM318 381.5H319V413H318ZM322 381.5H323V413H322ZM325 381.5H326V413H325ZM328 381.5H329V413H328ZM329 381.5H330V413H329ZM330 381.5H331V413H330ZM337 381.5H338V413H337ZM339 381.5H340V413H339ZM342 381.5H343V413H342ZM347 381.5H348V413H347ZM360 381.5H361V413H360ZM368 381.5H369V413H368ZM397 381.5H398V413H397ZM398 381.5H399V413H398ZM399 381.5H400V413H399ZM425 381.5H426V413H425ZM429 381.5H430V413H429ZM430 381.5H431V413H430ZM432 381.5H433V413H432ZM433 381.5H434V413H433ZM434 381.5H435V413H434ZM435 381.5H436V413H435ZM436 381.5H437V413H436ZM442 381.5H443V413H442ZM443 381.5H444V413H443ZM445 381.5H446V413H445ZM447 381.5H448V413H447ZM449 381.5H450V413H449ZM450 381.5H451V413H450ZM452 381.5H453V413H452ZM453 381.5H454V413H453ZM455 381.5H456V413H455ZM459 381.5H460V413H459ZM460 381.5H461V413H460ZM461 381.5H462V413H461ZM463 381.5H464V413H463ZM466 381.5H467V413H466ZM467 381.5H468V413H467ZM468 381.5H469V413H468ZM469 381.5H470V413H469ZM472 381.5H473V413H472ZM473 381.5H474V413H473ZM474 381.5H475V413H474ZM476 381.5H477V413H476ZM477 381.5H478V413H477ZM480 381.5H481V413H480ZM482 381.5H483V413H482ZM486 381.5H487V413H486ZM491 381.5H492V413H491ZM492 381.5H493V413H492ZM493 381.5H494V413H493ZM494 381.5H495V413H494ZM498 381.5H499V413H498ZM499 381.5H500V413H499ZM500 381.5H501V413H500ZM502 381.5H503V413H502ZM503 381.5H504V413H503ZM504 381.5H505V413H504ZM509 381.5H510V413H509ZM510 381.5H511V413H510ZM512 381.5H513V413H512ZM517 381.5H518V413H517ZM527 381.5H528V413H527ZM529 381.5H530V413H529ZM539 381.5H540V413H539ZM541 381.5H542V413H541ZM546 381.5H547V413H546ZM550 381.5H551V413H550ZM554 381.5H555V413H554ZM556 381.5H557V413H556ZM559 381.5H560V413H559ZM560 381.5H561V413H560ZM562 381.5H563V413H562ZM564 381.5H565V413H564ZM565 381.5H566V413H565ZM566 381.5H567V413H566ZM567 381.5H568V413H567ZM578 381.5H579V413H578ZM579 381.5H580V413H579ZM582 381.5H583V413H582ZM583 381.5H584V413H583ZM587 381.5H588V413H587ZM589 381.5H590V413H589Z" fill="#2fc700" shape-rendering="geometricPrecision"/>
<path d="M208 375.2H209V413H208ZM232 375.2H233V413H232ZM236 375.2H237V413H236ZM239 375.2H240V413H239ZM240 375.2H241V413H240ZM243 375.2H244V413H243ZM245 375.2H246V413H245ZM247 375.2H248V413H247ZM249 375.2H250V413H249ZM252 375.2H253V413H252ZM253 375.2H254V413H253ZM262 375.2H263V413H262ZM272 375.2H273V413H272ZM306 375.2H307V413H306ZM310 375.2H311V413H310ZM312 375.2H313V413H312ZM313 375.2H314V413H313ZM315 375.2H316V413H315ZM316 375.2H317V413H316ZM319 375.2H320V413H319ZM321 375.2H322V413H321ZM323 375.2H324V413H323ZM326 375.2H327V413H326ZM334 375.2H335V413H334ZM335 375.2H336V413H335ZM336 375.2H337V413H336ZM338 375.2H339V413H338ZM340 375.2H341V413H340ZM344 375.2H345V413H344ZM345 375.2H346V413H345ZM350 375.2H351V413H350ZM352 375.2H353V413H352ZM354 375.2H355V413H354ZM355 375.2H356V413H355ZM357 375.2H358V413H357ZM358 375.2H359V413H358ZM367 375.2H368V413H367ZM370 375.2H371V413H370ZM375 375.2H376V413H375ZM376 375.2H377V413H376ZM378 375.2H379V413H378ZM379 375.2H380V413H379ZM381 375.2H382V413H381ZM383 375.2H384V413H383ZM389 375.2H390V413H389ZM391 375.2H392V413H391ZM392 375.2H393V413H392ZM393 375.2H394V413H393ZM421 375.2H422V413H421ZM422 375.2H423V413H422ZM423 375.2H424V413H423ZM428 375.2H429V413H428ZM431 375.2H432V413H431ZM444 375.2H445V413H444ZM457 375.2H458V413H457ZM470 375.2H471V413H470ZM488 375.2H489V413H488ZM505 375.2H506V413H505ZM516 375.2H517V413H516ZM535 375.2H536V413H535ZM561 375.2H562V413H561ZM571 375.2H572V413H571ZM572 375.2H573V413H572ZM573 375.2H574V413H573ZM577 375.2H578V413H577ZM580 375.2H581V413H580ZM584 375.2H585V413H584ZM585 375.2H586V413H585ZM586 375.2H587V413H586ZM588 375.2H589V413H588ZM593 375.2H594V413H593Z" fill="#3ac700" shape-rendering="geometricPrecision"/>
<path d="M213 394.1H214V413H213ZM221 394.1H222V413H221ZM279 394.1H280V413H279ZM286 394.1H287V413H286ZM288 394.1H289V413H288ZM289 394.1H290V413H289ZM291 394.1H292V413H291ZM294 394.1H295V413H294ZM296 394.1H297V413H296ZM300 394.1H301V413H300ZM456 394.1H457V413H456ZM481 394.1H482V413H481ZM484 394.1H485V413H484ZM489 394.1H490V413H489ZM490 394.1H491V413H490ZM495 394.1H496V413H495ZM501 394.1H502V413H501ZM507 394.1H508V413H507ZM508 394.1H509V413H508ZM515 394.1H516V413H515ZM521 394.1H522V413H521ZM531 394.1H532V413H531ZM538 394.1H539V413H538ZM540 394.1H541V413H540ZM542 394.1H543V413H542ZM543 394.1H544V413H543ZM544 394.1H545V413H544ZM547 394.1H548V413H547ZM551 394.1H552V413H551Z" fill="#19c500" shape-rendering="geometricPrecision"/>
<path d="M254 362.6H255V413H254ZM263 362.6H264V413H263ZM353 362.6H354V413H353ZM361 362.6H362V413H361ZM364 362.6H365V413H364ZM377 362.6H378V413H377ZM384 362.6H385V413H384ZM385 362.6H386V413H385ZM387 362.6H388V413H387ZM395 362.6H396V413H395ZM401 362.6H402V413H401ZM402 362.6H403V413H402ZM590 362.6H591V413H590ZM592 362.6H593V413H592ZM594 362.6H595V413H594ZM596 362.6H597V413H596ZM601 362.6H602V413H601Z" fill="#52c900" shape-rendering="geometricPrecision"/>
<path d="M259 368.9H260V413H259ZM341 368.9H342V413H341ZM343 368.9H344V413H343ZM346 368.9H347V413H346ZM348 368.9H349V413H348ZM349 368.9H350V413H349ZM351 368.9H352V413H351ZM356 368.9H357V413H356ZM359 368.9H360V413H359ZM363 368.9H364V413H363ZM365 368.9H366V413H365ZM366 368.9H367V413H366ZM371 368.9H372V413H371ZM372 368.9H373V413H372ZM373 368.9H374V413H373ZM382 368.9H383V413H382ZM388 368.9H389V413H388ZM394 368.9H395V413H394ZM396 368.9H397V413H396ZM400 368.9H401V413H400ZM418 368.9H419V413H418ZM420 368.9H421V413H420ZM591 368.9H592V413H591ZM597 368.9H598V413H597Z" fill="#46c800" shape-rendering="geometricPrecision"/>
<path d="M362 356.3H363V413H362ZM374 356.3H375V413H374ZM380 356.3H381V413H380ZM386 356.3H387V413H386ZM390 356.3H391V413H390ZM413 356.3H414V413H413ZM416 356.3H417V413H416ZM595 356.3H596V413H595ZM598 356.3H599V413H598ZM602 356.3H603V413H602Z" fill="#5fc900" shape-rendering="geometricPrecision"/>
<path d="M369 343.7H370V413H369ZM411 343.7H412V413H411ZM415 343.7H416V413H415ZM599 343.7H600V413H599Z" fill="#79ca00" shape-rendering="geometricPrecision"/>
<path d="M403 350.0H404V413H403ZM407 350.0H408V413H407ZM417 350.0H418V413H417ZM419 350.0H420V413H419ZM600 350.0H601V413H600ZM605 350.0H606V413H605Z" fill="#6cca00" shape-rendering="geometricPrecision"/>
<path d="M404 312.2H405V413H404Z" fill="#bece00" shape-rendering="geometricPrecision"/>
<path d="M405 331.1H406V413H405ZM409 331.1H410V413H409Z" fill="#94cc00" shape-rendering="geometricPrecision"/>
<path d="M406 324.8H407V413H406ZM408 324.8H409V413H408ZM412 324.8H413V413H412ZM604 324.8H605V413H604Z" fill="#a1cc00" shape-rendering="geometricPrecision"/>
<path d="M410 337.4H411V413H410ZM414 337.4H415V413H414ZM603 337.4H604V413H603Z" fill="#86cb00" shape-rendering="geometricPrecision"/>
<path d="M203.5 353.2L204.5 353.0L205.5 352.8L206.5 352.5L207.5 353.2L208.5 352.8L209.5 349.5L210.5 346.0L211.5 346.6L212.5 347.9L213.5 346.4L214.5 348.1L215.5 347.7L216.5 349.8L217.5 351.4L218.5 351.5L219.5 352.1L220.5 352.6L221.5 351.8L222.5 352.9L223.5 352.8L224.5 352.5L225.5 353.2L226.5 352.5L227.5 351.8L228.5 352.1L229.5 352.5L230.5 352.3L231.5 346.9L232.5 347.6L233.5 346.7L234.5 347.2L235.5 346.6L236.5 346.3L237.5 347.2L238.5 347.0L239.5 346.7L240.5 347.4L241.5 347.8L242.5 346.9L243.5 346.6L244.5 346.9L245.5 347.1L246.5 349.3L247.5 352.9L248.5 353.1L249.5 353.6L250.5 354.0L251.5 352.3L252.5 348.9L253.5 348.4L254.5 347.8L255.5 348.1L256.5 348.3L257.5 349.1L258.5 350.9L259.5 355.1L260.5 354.8L261.5 355.2L262.5 354.7L263.5 354.2L264.5 355.6L265.5 354.7L266.5 354.5L267.5 355.3L268.5 355.1L269.5 354.1L270.5 355.9L271.5 355.0L272.5 355.7L273.5 354.5L274.5 354.2L275.5 355.0L276.5 355.8L277.5 354.9L278.5 355.0L279.5 354.6L280.5 355.0L281.5 354.8L282.5 354.4L283.5 355.0L284.5 355.2L285.5 354.2L286.5 355.6L287.5 354.7L288.5 355.2L289.5 354.5L290.5 355.7L291.5 354.0L292.5 355.1L293.5 355.6L294.5 355.2L295.5 354.9L296.5 355.5L297.5 354.7L298.5 354.7L299.5 354.1L300.5 354.7L301.5 354.8L302.5 354.8L303.5 353.8L304.5 353.3L305.5 354.0L306.5 354.6L307.5 353.4L308.5 354.1L309.5 354.4L310.5 354.5L311.5 353.2L312.5 353.1L313.5 353.4L314.5 353.6L315.5 353.4L316.5 354.0L317.5 352.5L318.5 353.6L319.5 353.0L320.5 352.6L321.5 352.6L322.5 353.2L323.5 353.4L324.5 352.9L325.5 353.6L326.5 352.2L327.5 353.1L328.5 352.1L329.5 353.1L330.5 352.9L331.5 353.0L332.5 352.7L333.5 353.1L334.5 353.3L335.5 351.9L336.5 352.7L337.5 352.7L338.5 352.5L339.5 352.2L340.5 352.2L341.5 351.7L342.5 351.6L343.5 352.1L344.5 351.0L345.5 351.1L346.5 352.5L347.5 351.0L348.5 350.8L349.5 351.0L350.5 352.2L351.5 350.8L352.5 351.1L353.5 352.2L354.5 352.2L355.5 350.3L356.5 350.8L357.5 351.5L358.5 351.8L359.5 351.6L360.5 351.4L361.5 350.3L362.5 351.1L363.5 351.4L364.5 349.9L365.5 350.0L366.5 351.2L367.5 349.7L368.5 350.2L369.5 349.8L370.5 350.0L371.5 349.5L372.5 349.6L373.5 349.5L374.5 350.6L375.5 349.7L376.5 350.1L377.5 350.0L378.5 350.8L379.5 350.2L380.5 351.0L381.5 351.8L382.5 352.1L383.5 352.6L384.5 352.1L385.5 353.2L386.5 352.7L387.5 353.5L388.5 353.1L389.5 353.1L390.5 352.9L391.5 352.3L392.5 353.8L393.5 352.2L394.5 352.8L395.5 352.5L396.5 352.3L397.5 351.7L398.5 351.2L399.5 349.6L400.5 347.1L401.5 347.4L402.5 344.8L403.5 343.5L404.5 345.0L405.5 344.2L406.5 344.5L407.5 344.4L408.5 345.9L409.5 345.0L410.5 346.2L411.5 346.3L412.5 345.5L413.5 347.2L414.5 345.9L415.5 346.1L416.5 346.7L417.5 345.7L418.5 346.6L419.5 346.5L420.5 346.4L421.5 345.9L422.5 347.0L423.5 346.6L424.5 346.7L425.5 346.4L426.5 345.9L427.5 347.0L428.5 346.0L429.5 346.8L430.5 346.6L431.5 347.1L432.5 346.7L433.5 345.8L434.5 346.4L435.5 346.2L436.5 347.1L437.5 347.1L438.5 347.2L439.5 346.7L440.5 346.6L441.5 342.5L442.5 343.9L443.5 342.5L444.5 342.1L445.5 342.7L446.5 343.6L447.5 343.1L448.5 343.6L449.5 343.1L450.5 341.7L451.5 342.2L452.5 342.1L453.5 341.8L454.5 341.5L455.5 342.0L456.5 341.9L457.5 341.8L458.5 341.6L459.5 341.7L460.5 341.5L461.5 342.3L462.5 341.4L463.5 341.7L464.5 341.1L465.5 342.3L466.5 342.1L467.5 342.3L468.5 340.8L469.5 340.5L470.5 340.9L471.5 341.4L472.5 340.5L473.5 340.6L474.5 341.0L475.5 341.6L476.5 341.5L477.5 341.2L478.5 341.4L479.5 341.2L480.5 340.7L481.5 340.2L482.5 341.8L483.5 340.8L484.5 341.8L485.5 341.6L486.5 340.3L487.5 340.7L488.5 340.1L489.5 340.9L490.5 341.7L491.5 341.0L492.5 340.6L493.5 339.9L494.5 339.8L495.5 340.8L496.5 340.9L497.5 341.4L498.5 340.4L499.5 341.2L500.5 341.3L501.5 341.5L502.5 341.5L503.5 340.2L504.5 341.3L505.5 339.7L506.5 341.3L507.5 339.9L508.5 341.3L509.5 341.5L510.5 340.1L511.5 341.0L512.5 340.1L513.5 341.1L514.5 341.4L515.5 340.0L516.5 340.1L517.5 339.9L518.5 340.1L519.5 341.3L520.5 340.3L521.5 340.2L522.5 340.6L523.5 339.7L524.5 341.0L525.5 339.7L526.5 340.1L527.5 341.5L528.5 341.5L529.5 340.3L530.5 340.0L531.5 341.3L532.5 340.9L533.5 340.1L534.5 341.2L535.5 339.9L536.5 342.8L537.5 343.9L538.5 343.2L539.5 342.8L540.5 343.0L541.5 342.5L542.5 343.5L543.5 342.2L544.5 343.0L545.5 342.5L546.5 342.4L547.5 342.8L548.5 342.8L549.5 342.0L550.5 341.7L551.5 342.0L552.5 342.3L553.5 342.1L554.5 342.0L555.5 340.3L556.5 340.8L557.5 340.6L558.5 341.5L559.5 341.0L560.5 340.3L561.5 340.6L562.5 341.0L563.5 341.5L564.5 341.3L565.5 340.4L566.5 341.7L567.5 341.7L568.5 342.5L569.5 342.5L570.5 343.1L571.5 343.9L572.5 344.3L573.5 343.7L574.5 343.2L575.5 342.8L576.5 342.2L577.5 341.9L578.5 343.4L579.5 341.7L580.5 341.6L581.5 341.4L582.5 341.8L583.5 341.9L584.5 339.2L585.5 337.7L586.5 336.3L587.5 334.3L588.5 335.3L589.5 335.9L590.5 335.1L591.5 334.7L592.5 336.0L593.5 335.0L594.5 334.8L595.5 336.2L596.5 335.6L597.5 335.6L598.5 336.1L599.5 336.7L600.5 336.7L601.5 335.9L602.5 335.9L603.5 336.6L604.5 337.4L605.5 336.2" fill="none" stroke="#dca8dc" stroke-width="1" shape-rendering="geometricPrecision"/>
<rect x="605" y="288" width="1" height="62" fill="#40d0f0" />
<rect x="198" y="381" width="4" height="1" fill="#000" />
<text x="192.50" y="385.30" font-size="11" textLength="5.93" lengthAdjust="spacingAndGlyphs" fill="#000" stroke="#000" stroke-width="0.12" >5</text>
<rect x="198" y="350" width="4" height="1" fill="#000" />
<text x="186.53" y="353.80" font-size="11" textLength="11.87" lengthAdjust="spacingAndGlyphs" fill="#000" stroke="#000" stroke-width="0.12" >10</text>
<rect x="198" y="319" width="4" height="1" fill="#000" />
<text x="186.58" y="322.30" font-size="11" textLength="11.87" lengthAdjust="spacingAndGlyphs" fill="#000" stroke="#000" stroke-width="0.12" >15</text>
<rect x="198" y="287" width="4" height="1" fill="#000" />
<text x="186.53" y="290.80" font-size="11" textLength="11.87" lengthAdjust="spacingAndGlyphs" fill="#000" stroke="#000" stroke-width="0.12" >20</text>
<text x="639.99" y="391.60" font-size="11" textLength="15.42" lengthAdjust="spacingAndGlyphs" fill="#000" stroke="#000" stroke-width="0.12" >4%</text>
<text x="639.72" y="366.40" font-size="11" textLength="15.42" lengthAdjust="spacingAndGlyphs" fill="#000" stroke="#000" stroke-width="0.12" >8%</text>
<text x="639.40" y="341.20" font-size="11" textLength="21.36" lengthAdjust="spacingAndGlyphs" fill="#000" stroke="#000" stroke-width="0.12" >12%</text>
<text x="639.40" y="316.00" font-size="11" textLength="21.36" lengthAdjust="spacingAndGlyphs" fill="#000" stroke="#000" stroke-width="0.12" >16%</text>
<text x="639.67" y="290.80" font-size="11" textLength="21.36" lengthAdjust="spacingAndGlyphs" fill="#000" stroke="#000" stroke-width="0.12" >20%</text>
<text x="195.06" y="422.60" font-size="11" textLength="14.83" lengthAdjust="spacingAndGlyphs" fill="#000" stroke="#000" stroke-width="0.12" >0.0</text>
<text x="238.16" y="422.60" font-size="11" textLength="14.83" lengthAdjust="spacingAndGlyphs" fill="#000" stroke="#000" stroke-width="0.12" >5.0</text>
<text x="278.11" y="422.60" font-size="11" textLength="20.77" lengthAdjust="spacingAndGlyphs" fill="#000" stroke="#000" stroke-width="0.12" >10.0</text>
<text x="321.21" y="422.60" font-size="11" textLength="20.77" lengthAdjust="spacingAndGlyphs" fill="#000" stroke="#000" stroke-width="0.12" >15.0</text>
<text x="364.44" y="422.60" font-size="11" textLength="20.77" lengthAdjust="spacingAndGlyphs" fill="#000" stroke="#000" stroke-width="0.12" >20.0</text>
<text x="407.54" y="422.60" font-size="11" textLength="20.77" lengthAdjust="spacingAndGlyphs" fill="#000" stroke="#000" stroke-width="0.12" >25.0</text>
<text x="450.70" y="422.60" font-size="11" textLength="20.77" lengthAdjust="spacingAndGlyphs" fill="#000" stroke="#000" stroke-width="0.12" >30.0</text>
<text x="493.80" y="422.60" font-size="11" textLength="20.77" lengthAdjust="spacingAndGlyphs" fill="#000" stroke="#000" stroke-width="0.12" >35.0</text>
<text x="537.00" y="422.60" font-size="11" textLength="20.77" lengthAdjust="spacingAndGlyphs" fill="#000" stroke="#000" stroke-width="0.12" >40.0</text>
<text x="580.10" y="422.60" font-size="11" textLength="20.77" lengthAdjust="spacingAndGlyphs" fill="#000" stroke="#000" stroke-width="0.12" >45.0</text>
<text x="614.70" y="422.60" font-size="11" textLength="39.15" lengthAdjust="spacingAndGlyphs" fill="#000" stroke="#000" stroke-width="0.12" >50.0 GB</text>
<text x="264.79" y="443.20" font-size="11.5" textLength="20.38" lengthAdjust="spacingAndGlyphs" fill="#000" stroke="#000" stroke-width="0.12" >LDC</text>
<text x="323.82" y="443.20" font-size="11.5" textLength="15.63" lengthAdjust="spacingAndGlyphs" fill="#000" stroke="#000" stroke-width="0.12" >BIS</text>
<text x="175.80" y="459.40" font-size="11.5" textLength="19.86" lengthAdjust="spacingAndGlyphs" fill="#000" stroke="#000" stroke-width="0.12" >Avg</text>
<text x="175.59" y="476.00" font-size="11.5" textLength="21.52" lengthAdjust="spacingAndGlyphs" fill="#000" stroke="#000" stroke-width="0.12" >Max</text>
<text x="173.76" y="492.20" font-size="11.5" textLength="25.87" lengthAdjust="spacingAndGlyphs" fill="#000" stroke="#000" stroke-width="0.12" >Total</text>
<text x="259.18" y="459.40" font-size="11.5" textLength="26.17" lengthAdjust="spacingAndGlyphs" fill="#1212ea" stroke="#1212ea" stroke-width="0.12" >39.02</text>
<text x="268.50" y="476.00" font-size="11.5" textLength="16.74" lengthAdjust="spacingAndGlyphs" fill="#1212ea" stroke="#1212ea" stroke-width="0.12" >725</text>
<text x="237.06" y="492.20" font-size="11.5" textLength="48.06" lengthAdjust="spacingAndGlyphs" fill="#1212ea" stroke="#1212ea" stroke-width="0.12" >29796484</text>
<text x="318.88" y="459.40" font-size="11.5" textLength="20.56" lengthAdjust="spacingAndGlyphs" fill="#1212ea" stroke="#1212ea" stroke-width="0.12" >0.53</text>
<text x="327.71" y="476.00" font-size="11.5" textLength="11.74" lengthAdjust="spacingAndGlyphs" fill="#1212ea" stroke="#1212ea" stroke-width="0.12" >16</text>
<text x="303.79" y="492.20" font-size="11.5" textLength="35.66" lengthAdjust="spacingAndGlyphs" fill="#1212ea" stroke="#1212ea" stroke-width="0.12" >401465</text>
<text x="424.59" y="460.20" font-size="11.5" textLength="30.80" lengthAdjust="spacingAndGlyphs" fill="#1212ea" stroke="#1212ea" stroke-width="0.12" >10.3%</text>
<text x="424.59" y="476.50" font-size="11.5" textLength="30.80" lengthAdjust="spacingAndGlyphs" fill="#1212ea" stroke="#1212ea" stroke-width="0.12" >12.4%</text>
<text x="532.81" y="448.40" font-size="11.5" textLength="30.41" lengthAdjust="spacingAndGlyphs" fill="#1212ea" stroke="#1212ea" stroke-width="0.12" >1.74 X</text>
<text x="533.38" y="476.00" font-size="11.5" textLength="50.21" lengthAdjust="spacingAndGlyphs" fill="#1212ea" stroke="#1212ea" stroke-width="0.12" >47731 MB</text>
<text x="533.05" y="491.70" font-size="11.5" textLength="36.40" lengthAdjust="spacingAndGlyphs" fill="#1212ea" stroke="#1212ea" stroke-width="0.12" >763145</text>
<rect x="408.5" y="433.5" width="12" height="12" rx="2" fill="#f2f4f6" stroke="#9aa6b2" stroke-width="1.1" shape-rendering="geometricPrecision"/>
<path d="M411.6 438.4 L414.5 442.5 L418 435.6" fill="none" stroke="#2c4c72" stroke-width="1.7" shape-rendering="geometricPrecision"/>
<text x="429.93" y="444.20" font-size="11.5" textLength="25.27" lengthAdjust="spacingAndGlyphs" fill="#000" stroke="#000" stroke-width="0.12" >Jitter</text>
<text x="474.20" y="448.40" font-size="11.5" textLength="31.83" lengthAdjust="spacingAndGlyphs" fill="#000" stroke="#000" stroke-width="0.12" >Speed</text>
<text x="473.75" y="476.00" font-size="11.5" textLength="42.36" lengthAdjust="spacingAndGlyphs" fill="#000" stroke="#000" stroke-width="0.12" >Position</text>
<text x="474.22" y="491.70" font-size="11.5" textLength="41.46" lengthAdjust="spacingAndGlyphs" fill="#000" stroke="#000" stroke-width="0.12" >Samples</text>
<rect x="588.5" y="431.5" width="74" height="20" rx="3" fill="url(#gBtn)" stroke="#a6b0ba" stroke-width="1" shape-rendering="geometricPrecision"/>
<text x="591.69" y="445.80" font-size="12.3" textLength="24.52" lengthAdjust="spacingAndGlyphs" fill="#000" stroke="#000" stroke-width="0.12" >4.0 X</text>
<path d="M650 441 L653.5 444.5 L657 441" fill="none" stroke="#000" stroke-width="1.6" shape-rendering="geometricPrecision"/>
<rect x="589.5" y="455.5" width="72" height="20" rx="3" fill="url(#gBtn)" stroke="#a6b0ba" stroke-width="1" shape-rendering="geometricPrecision"/>
<text x="602.75" y="469.80" font-size="12.3" textLength="44.78" lengthAdjust="spacingAndGlyphs" fill="#000" stroke="#000" stroke-width="0.12" >Start full</text>
<rect x="588.5" y="482.5" width="72" height="20" rx="3" fill="url(#gBtn)" stroke="#a6b0ba" stroke-width="1" shape-rendering="geometricPrecision"/>
<text x="599.77" y="496.90" font-size="12.3" textLength="48.22" lengthAdjust="spacingAndGlyphs" fill="#000" stroke="#000" stroke-width="0.12" >Start part</text>
<rect x="14" y="508" width="659" height="18" fill="#e9ebef" />
<rect x="14" y="508" width="139" height="18" fill="#eceef0" />
<text x="16.49" y="521.90" font-size="12.3" textLength="72.22" lengthAdjust="spacingAndGlyphs" fill="#000" stroke="#000" stroke-width="0.12" >Test completed</text>
<rect x="159" y="511" width="302" height="13" fill="url(#gProg)" />
<rect x="159" y="511" width="302" height="6" fill="#4a6682" />
<circle cx="422" cy="517.5" r="1.2" fill="#7a90a8" shape-rendering="geometricPrecision"/>
<circle cx="430" cy="517.5" r="1.2" fill="#7a90a8" shape-rendering="geometricPrecision"/>
<circle cx="438" cy="517.5" r="1.2" fill="#7a90a8" shape-rendering="geometricPrecision"/>
<circle cx="446" cy="517.5" r="1.2" fill="#7a90a8" shape-rendering="geometricPrecision"/>
<rect x="462" y="511" width="57" height="13" fill="#e4e6ea" />
<text x="466.71" y="521.90" font-size="12.3" textLength="35.62" lengthAdjust="spacingAndGlyphs" fill="#000" stroke="#000" stroke-width="0.12" >100.0%</text>
<rect x="524" y="511" width="148" height="13" fill="#e9ebef" />
<text x="614.34" y="522.30" font-size="12.3" textLength="28.08" lengthAdjust="spacingAndGlyphs" fill="#000" stroke="#000" stroke-width="0.12" >66:30</text>
<rect x="670" y="516" width="1" height="1" fill="#8c9096" />
<rect x="668" y="518" width="1" height="1" fill="#8c9096" />
<rect x="670" y="518" width="1" height="1" fill="#8c9096" />
<rect x="666" y="520" width="1" height="1" fill="#8c9096" />
<rect x="668" y="520" width="1" height="1" fill="#8c9096" />
<rect x="670" y="520" width="1" height="1" fill="#8c9096" />
<rect x="664" y="522" width="1" height="1" fill="#8c9096" />
<rect x="666" y="522" width="1" height="1" fill="#8c9096" />
<rect x="668" y="522" width="1" height="1" fill="#8c9096" />
<rect x="670" y="522" width="1" height="1" fill="#8c9096" />
</svg></body></html>
